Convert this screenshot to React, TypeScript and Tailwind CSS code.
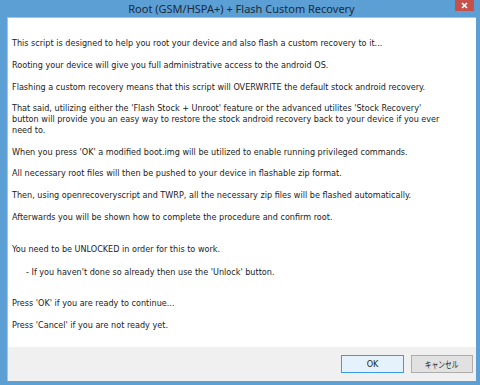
export default function App() {
  return (
    <div className="flex h-[385px] w-[480px] flex-col bg-[#5b9fd4] pb-[4px] pl-[7px] pr-[4px]" style={{ fontFamily: '"DejaVu Sans Condensed", "DejaVu Sans", sans-serif' }}>
      {/* title bar */}
      <div className="relative flex h-[17px] shrink-0 items-center justify-center">
        <span className="text-[11px] leading-none text-[#1b2a3a]" style={{ fontFamily: '"Noto Sans", "Open Sans", sans-serif' }}>
          Root (GSM/HSPA+) + Flash Custom Recovery
        </span>
        <div className="absolute right-[2px] top-0 flex h-[11px] w-[19px] items-center justify-center bg-[#c7504b]">
          <svg width="7" height="7" viewBox="0 0 7 7">
            <path d="M1 1L6 6M6 1L1 6" stroke="white" strokeWidth="1.6" />
          </svg>
        </div>
      </div>

      {/* body */}
      <div className="flex flex-1 flex-col border-l border-t border-[#9cc6e8] bg-white">
        <div className="flex-1 whitespace-nowrap px-[4px] pt-[20px] text-[9px] leading-[11px] text-[#222222]">
          <p>This script is designed to help you root your device and also flash a custom recovery to it...</p>
          <p className="mt-[11px]">Rooting your device will give you full administrative access to the android OS.</p>
          <p className="mt-[11px]">Flashing a custom recovery means that this script will OVERWRITE the default stock android recovery.</p>
          <p className="mt-[10px]">
            That said, utilizing either the 'Flash Stock + Unroot' feature or the advanced utilites 'Stock Recovery'
            <br />
            button will provide you an easy way to restore the stock android recovery back to your device if you ever
            <br />
            need to.
          </p>
          <p className="mt-[11px]">When you press 'OK' a modified boot.img will be utilized to enable running privileged commands.</p>
          <p className="mt-[10px]">All necessary root files will then be pushed to your device in flashable zip format.</p>
          <p className="mt-[11px]">Then, using openrecoveryscript and TWRP, all the necessary zip files will be flashed automatically.</p>
          <p className="mt-[11px]">Afterwards you will be shown how to complete the procedure and confirm root.</p>
          <p className="mt-[21px]">You need to be UNLOCKED in order for this to work.</p>
          <p className="mt-[12px] pl-[14px]">- If you haven't done so already then use the 'Unlock' button.</p>
          <p className="mt-[20px]">Press 'OK' if you are ready to continue...</p>
          <p className="mt-[11px]">Press 'Cancel' if you are not ready yet.</p>
        </div>

        {/* footer */}
        <div className="flex h-[34px] shrink-0 items-center justify-end gap-[7px] bg-[#f0f0f0] pr-[3px]">
          <button className="h-[18px] w-[63px] border border-[#3c9ae8] bg-[#e5f1fb] text-[9px] leading-none text-[#1e1e1e]">
            OK
          </button>
          <button className="flex h-[18px] w-[62px] items-center justify-center border border-[#adadad] bg-[#e1e1e1] text-[9px] leading-none text-[#1e1e1e]">
            <span className="inline-block scale-x-[0.75]" style={{ fontFamily: '"Noto Sans CJK JP", sans-serif' }}>
              キャンセル
            </span>
          </button>
        </div>
      </div>
    </div>
  );
}
